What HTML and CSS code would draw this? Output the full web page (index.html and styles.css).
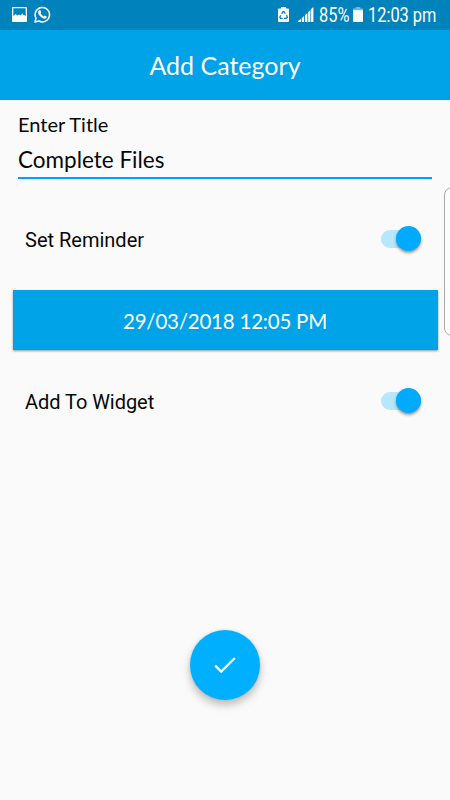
FILE: index.html
```html
<!DOCTYPE html>
<html lang="en">
<head>
<meta charset="utf-8">
<title>Add Category</title>
<link rel="stylesheet" href="styles.css">
</head>
<body>
<div class="screen">
  <div class="status">
    <svg class="i-photo" width="15" height="15" viewBox="0 0 15 15"><path fill="#fff" fill-rule="evenodd" d="M1 0H14Q15 0 15 1V14Q15 15 14 15H1Q0 15 0 14V1Q0 0 1 0ZM1.3 1.3V9.3L3.5 7L5.3 8.5L7 7.6L8.8 8.5L10.2 6.3L11.6 8.3L12.4 8L13.7 9.5V1.3Z"/></svg>
    <svg class="i-chat" width="17" height="17" viewBox="0 0 17 17"><path fill="none" stroke="#fff" stroke-width="1.5" stroke-linejoin="round" d="M1 16L2 12.1A7.2 7.2 0 1 1 4.9 15Z"/><path fill="#fff" d="M5 4.4Q5.7 3.7 6.4 4.3L7.2 6.3L6.5 7.3Q7.6 9.4 9.7 10.4L10.7 9.4L12.8 10.4Q12.6 12.6 10.5 12.7Q8.3 12.5 6.1 10.3Q4 8.1 4.1 6.3Q4.2 5.1 5 4.4Z"/></svg>
    <span class="spacer"></span>
    <svg class="i-recycle" width="11" height="15" viewBox="0 0 11 15"><path fill="#fff" d="M3 0H8V1.5H10Q11 1.5 11 2.5V14Q11 15 10 15H1Q0 15 0 14V2.5Q0 1.5 1 1.5H3Z"/><path fill="none" stroke="#0083bd" stroke-width="1.3" d="M3.6 6.8L5 4.7H6L7.2 6.6M8.5 8L9.3 10.3L8.3 11.4H6M4.6 11.4H2.5L1.8 10.2L2.8 8.2"/></svg>
    <svg class="i-signal" width="16" height="15" viewBox="0 0 16 15"><path fill="#fff" d="M0 15V14L3 12V15ZM3.8 15V11L6.1 9V15ZM7 15V8L9.4 6V15ZM10.2 15V5L12.4 3V15ZM13.1 15V2L15.4 0V15Z"/></svg>
    <span class="pct"><span class="narrow">85%</span></span>
    <svg class="i-batt" width="10" height="15" viewBox="0 0 10 15"><path fill="#70b9dc" d="M2.7 0H7.3V1.4H10V4H0V1.4H2.7Z"/><path fill="#fff" d="M0 3.3H10V14Q10 15 9 15H1Q0 15 0 14Z"/></svg>
    <span class="clock"><span class="narrow">12:03 pm</span></span>
  </div>
  <header class="bar"><h1>Add Category</h1></header>
  <main>
    <div class="field">
      <label class="label">Enter Title</label>
      <div class="value">Complete Files</div>
    </div>
    <div class="row row-reminder"><span class="row-text reminder">Set Reminder</span><span class="switch"><span class="thumb"></span></span></div>
    <div class="date"><span>29/03/2018 12:05 PM</span></div>
    <div class="row row-widget"><span class="row-text widget">Add To Widget</span><span class="switch"><span class="thumb"></span></span></div>
    <div class="fab"><svg width="24" height="20" viewBox="0 0 24 20"><path fill="none" stroke="#fff" stroke-width="2.2" d="M2.2 10.6L8.2 16.6L21.8 3"/></svg></div>
  </main>
  <div class="edge"></div>
</div>
</body>
</html>
```

FILE: styles.css
```css
* { box-sizing: border-box; }
body { margin: 0; }
.screen { position: relative; width: 450px; height: 800px; overflow: hidden; background: #fafafa; color: #080808; font-family: Lato, sans-serif; }
.status { display: flex; height: 30px; padding: 7px 0 0 12px; background: #0083bd; color: #fff; font-family: Roboto, sans-serif; }
.status svg { display: block; flex: none; }
.i-chat { margin: -1px 0 0 7px; }
.spacer { width: 227px; flex: none; }
.i-signal { margin-left: 9px; }
.pct { width: 29px; margin-left: 5px; }
.i-batt { margin-left: 5px; }
.clock { margin-left: 5px; width: 68px; }
.narrow { display: block; width: max-content; font-size: 19.5px; line-height: 22px; margin-top: -2px; transform: scaleX(.84); transform-origin: left; }
.bar { display: flex; height: 70px; align-items: center; justify-content: center; background: #00a2e8; color: #fff; }
h1 { margin: 0 0 1px; font-size: 25px; line-height: 32px; font-weight: 400; }
.field { height: 79px; margin: 0 18px; padding-top: 12px; border-bottom: 2px solid #00a2ff; }
.label { display: block; font-size: 20px; line-height: 24px; }
.value { margin-top: 9px; font-size: 22.5px; line-height: 30px; }
.row { display: flex; justify-content: space-between; align-items: center; height: 26px; padding: 0 29px 0 25px; font-family: Roboto, sans-serif; font-size: 20px; }
.row-reminder { margin-top: 47px; }
.row-widget { margin-top: 38px; }
.row-text { line-height: 26px; padding-top: 2px; }
.widget { letter-spacing: -.05px; }
.switch { display: flex; justify-content: flex-end; align-items: center; width: 40px; height: 18px; border-radius: 9px; background: #b8e7fb; }
.thumb { width: 25px; height: 25px; flex: none; border-radius: 50%; background: #00aaff; box-shadow: 0 2px 3px rgba(0,0,0,.4); }
.row .thumb { margin-bottom: 1px; }
.date { display: flex; align-items: center; justify-content: center; height: 60px; margin: 38px 12.5px 0; background: #00a2e8; color: #fff; font-size: 20.5px; line-height: 28px; letter-spacing: -.22px; box-shadow: 0 1px 2px rgba(0,0,0,.4); }
.date span { margin-top: 1px; }
.fab { display: flex; align-items: center; justify-content: center; width: 70px; height: 70px; margin: 216px auto 0; border-radius: 50%; background: #00b0ff; box-shadow: 0 5px 9px rgba(0,0,0,.25), 0 0 3px rgba(0,0,0,.12); }
.edge { position: absolute; left: 444px; top: 187px; width: 20px; height: 149px; border: 1px solid #aaa; border-radius: 8px; background: #fcfcfc; }
```
